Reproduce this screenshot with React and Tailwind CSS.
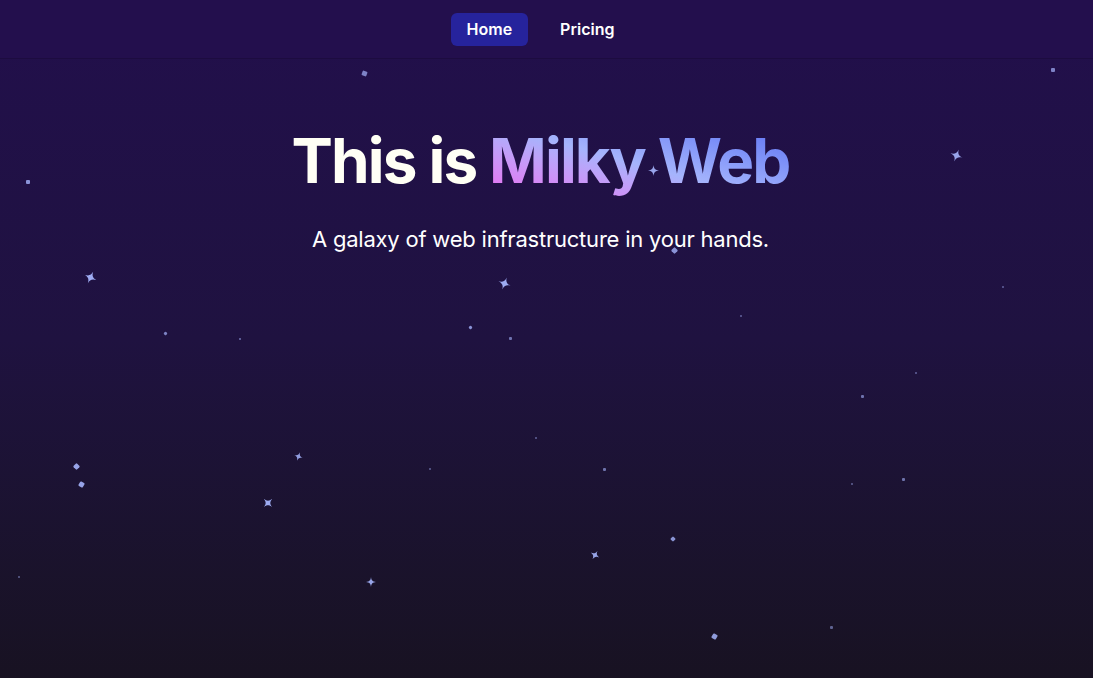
const STAR = "M12 0 C12.8 8 16 11.2 24 12 C16 12.8 12.8 16 12 24 C11.2 16 8 12.8 0 12 C8 11.2 11.2 8 12 0Z";

const stars = [
  { x: 364, y: 73, s: 5, r: 20, o: 0.7, t: "sq" },
  { x: 1053, y: 70, s: 4, r: 0, o: 0.7, t: "sq" },
  { x: 28, y: 182, s: 4, r: 0, o: 0.8, t: "sq" },
  { x: 956, y: 155, s: 13, r: 20, o: 0.9, t: "star" },
  { x: 653, y: 170, s: 11, r: 0, o: 0.9, t: "star" },
  { x: 90, y: 277, s: 13, r: 25, o: 0.95, t: "star" },
  { x: 504, y: 283, s: 13, r: 20, o: 0.95, t: "star" },
  { x: 674, y: 250, s: 5, r: 45, o: 0.8, t: "sq" },
  { x: 1003, y: 287, s: 2, r: 0, o: 0.5, t: "sq" },
  { x: 165, y: 333, s: 3, r: 45, o: 0.7, t: "sq" },
  { x: 240, y: 339, s: 2, r: 0, o: 0.6, t: "sq" },
  { x: 470, y: 327, s: 3, r: 45, o: 0.8, t: "sq" },
  { x: 510, y: 338, s: 3, r: 0, o: 0.6, t: "sq" },
  { x: 741, y: 316, s: 2, r: 0, o: 0.5, t: "sq" },
  { x: 916, y: 373, s: 2, r: 0, o: 0.5, t: "sq" },
  { x: 862, y: 396, s: 3, r: 0, o: 0.6, t: "sq" },
  { x: 536, y: 438, s: 2, r: 0, o: 0.5, t: "sq" },
  { x: 76, y: 466, s: 5, r: 45, o: 0.9, t: "sq" },
  { x: 81, y: 484, s: 5, r: 30, o: 0.9, t: "sq" },
  { x: 298, y: 456, s: 9, r: 20, o: 0.85, t: "star" },
  { x: 430, y: 469, s: 2, r: 0, o: 0.5, t: "sq" },
  { x: 604, y: 469, s: 3, r: 0, o: 0.6, t: "sq" },
  { x: 903, y: 479, s: 3, r: 0, o: 0.6, t: "sq" },
  { x: 852, y: 484, s: 2, r: 0, o: 0.5, t: "sq" },
  { x: 268, y: 503, s: 12, r: 45, o: 0.95, t: "star" },
  { x: 673, y: 539, s: 4, r: 45, o: 0.8, t: "sq" },
  { x: 595, y: 555, s: 10, r: 30, o: 0.9, t: "star" },
  { x: 19, y: 577, s: 2, r: 0, o: 0.5, t: "sq" },
  { x: 371, y: 582, s: 10, r: 0, o: 0.9, t: "star" },
  { x: 714, y: 636, s: 5, r: 30, o: 0.85, t: "sq" },
  { x: 831, y: 627, s: 3, r: 0, o: 0.5, t: "sq" },
];

function Star({ x, y, s, r, o, t }) {
  if (t === "sq") {
    return (
      <div
        className="absolute bg-[#a5b4fc] rounded-[1px]"
        style={{ left: x - s / 2, top: y - s / 2, width: s, height: s, opacity: o, transform: `rotate(${r}deg)` }}
      />
    );
  }
  return (
    <svg
      className="absolute"
      viewBox="0 0 24 24"
      style={{ left: x - s / 2, top: y - s / 2, width: s, height: s, opacity: o, transform: `rotate(${r}deg)` }}
    >
      <path d={STAR} fill="#a5b4fc" />
    </svg>
  );
}

export default function App() {
  return (
    <div
      className="relative h-[678px] w-full overflow-hidden bg-gradient-to-b from-[#220f4c] via-[#1f1240] to-[#181222]"
      style={{ fontFamily: "Inter, 'Noto Sans', sans-serif" }}
    >
      <nav className="relative z-10 h-[59px] bg-[#230f4d] border-b border-[#1d0c40] flex items-center justify-center pr-3">
        <div className="flex items-center gap-4">
          <a className="px-4 h-[33px] flex items-center rounded-md bg-[#26239c] text-white font-semibold text-base">
            Home
          </a>
          <a className="px-4 h-[33px] flex items-center rounded-md text-white font-semibold text-base">
            Pricing
          </a>
        </div>
      </nav>

      {stars.map((st, i) => (
        <Star key={i} {...st} />
      ))}

      <main className="relative flex flex-col items-center pr-3 pt-[71px]">
        <h1 className="text-[62px] leading-none font-bold tracking-[-0.03em] text-[#fffff5]">
          This is{" "}
          <span className="bg-gradient-to-tr from-[#f05bf0] via-[#a5b4fc] to-[#5b6cf2] bg-clip-text text-transparent pb-2">
            Milky Web
          </span>
        </h1>
        <p className="mt-[31px] text-[22px] leading-8 tracking-[-0.01em] text-white">
          A galaxy of web infrastructure in your hands.
        </p>
      </main>
    </div>
  );
}
